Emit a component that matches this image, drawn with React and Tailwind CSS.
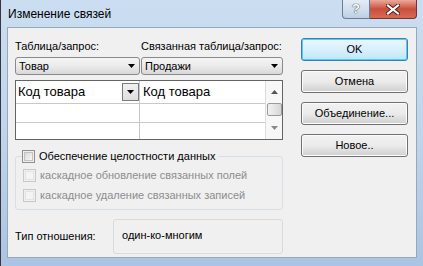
import React from "react";

const font = "font-['Liberation_Sans',Arial,sans-serif]";

function Arrow({ className = "" }) {
	return (
		<svg width="7" height="4" viewBox="0 0 7 4" className={className}>
			<path d="M0 0H7L3.5 4Z" fill="#000" />
		</svg>
	);
}

function Combo({ value, className = "" }) {
	return (
		<div
			className={`h-[18px] flex items-center rounded-[3px] border border-[#8a8a8a] bg-gradient-to-b from-[#f4f4f4] via-[#ebebeb] to-[#d8d8d8] pl-[3px] pr-[4px] text-[11px] text-black ${className}`}
		>
			<span className="flex-1 leading-none">{value}</span>
			<Arrow />
		</div>
	);
}

function Check({ disabled }) {
	return (
		<div
			className={`w-[13px] h-[13px] shrink-0 border p-[1px] ${
				disabled ? "border-[#c8c8c8]" : "border-[#8e8f8f]"
			}`}
		>
			<div
				className={`w-full h-full border ${
					disabled
						? "border-[#e3e3e3] bg-[#f4f4f4]"
						: "border-[#c2c2c2] bg-gradient-to-br from-[#d8d8d8] to-[#f7f7f7]"
				}`}
			/>
		</div>
	);
}

function Button({ children, focused }) {
	return (
		<div
			className={`h-[23px] flex items-center justify-center rounded-[3px] border text-[11px] text-black ${
				focused
					? "border-[#3c7fb1] bg-gradient-to-b from-[#eaf6fd] via-[#d9f0fc] to-[#bee6fd] shadow-[inset_0_0_0_1px_#48d0ff]"
					: "border-[#707070] bg-gradient-to-b from-[#f2f2f2] via-[#ebebeb] to-[#cfcfcf] shadow-[inset_0_0_0_1px_#fcfcfc]"
			}`}
		>
			{children}
		</div>
	);
}

export default function App() {
	return (
		<div
			className={`w-[423px] h-[266px] overflow-hidden flex flex-col border-l border-[#3a3440] bg-gradient-to-b from-[#cbdef1] via-[#bfd5ec] to-[#aac4e3] ${font}`}
		>
			{/* title bar */}
			<div className="h-[27px] flex items-start shrink-0">
				<div className="pl-[7px] pt-[7px] text-[12px] leading-[14px] text-black">
					Изменение связей
				</div>
				<div className="flex-1" />
				<div className="flex mr-[6px]">
					<div className="w-[28px] h-[19px] flex items-center justify-center rounded-bl-[4px] border border-t-0 border-[#6b7c95] bg-gradient-to-b from-[#e4ecf6] via-[#d3dfee] to-[#bdcfe5] text-[13px] font-bold text-white [text-shadow:0_0_1px_#2d3a4c,0_0_1px_#2d3a4c]">
						?
					</div>
					<div className="w-[47px] h-[19px] flex items-center justify-center rounded-br-[4px] border border-t-0 border-l-0 border-[#7b3029] bg-gradient-to-b from-[#e9a89b] via-[#c94e3d] to-[#d76a55]">
						<svg width="14" height="11" viewBox="0 0 14 11">
							<path
								d="M2 1.5L12 9.5M12 1.5L2 9.5"
								stroke="#4a1a14"
								strokeWidth="4"
								strokeLinecap="square"
							/>
							<path
								d="M2 1.5L12 9.5M12 1.5L2 9.5"
								stroke="#fff"
								strokeWidth="2.2"
								strokeLinecap="square"
							/>
						</svg>
					</div>
				</div>
			</div>

			{/* client area */}
			<div className="ml-[6px] mr-[6px] h-[231px] flex border border-[#9aa7b5] bg-[#f0f0f0] pl-[7px]">
				{/* left column */}
				<div className="w-[268px] flex flex-col pt-[11px]">
					<div className="flex text-[11px] leading-[14px] text-black">
						<div className="w-[126px]">Таблица/запрос:</div>
						<div>Связанная таблица/запрос:</div>
					</div>
					<div className="flex gap-[1px] mt-[4px]">
						<Combo value="Товар" className="w-[125px]" />
						<Combo value="Продажи" className="w-[142px]" />
					</div>

					{/* grid */}
					<div className="mt-[5px] h-[60px] flex border border-[#646464] bg-white overflow-hidden">
						<div className="flex-1 flex flex-col">
							<div className="h-[23px] flex border-b border-[#c8c8c8]">
								<div className="w-[124px] flex items-center border-r border-[#c8c8c8] pl-[2px]">
									<span className="flex-1 text-[13px] text-black">Код товара</span>
									<div className="w-[17px] h-[18px] flex items-center justify-center border border-[#7a7a7a] bg-gradient-to-b from-[#f0f0f0] to-[#dedede]">
										<Arrow />
									</div>
								</div>
								<div className="flex-1 flex items-center pl-[3px] text-[13px] text-black">
									Код товара
								</div>
							</div>
							<div className="h-[19px] flex border-b border-[#c8c8c8]">
								<div className="w-[124px] border-r border-[#c8c8c8]" />
								<div className="flex-1" />
							</div>
							<div className="flex-1 flex">
								<div className="w-[124px] border-r border-[#c8c8c8]" />
								<div className="flex-1" />
							</div>
						</div>
						{/* scrollbar */}
						<div className="w-[17px] flex flex-col items-center border-l border-[#dcdcdc] bg-[#f7f7f7]">
							<div className="h-[22px] flex items-center justify-center">
								<svg width="7" height="4" viewBox="0 0 7 4">
									<path d="M0 4H7L3.5 0Z" fill="#555" />
								</svg>
							</div>
							<div className="w-[15px] h-[13px] rounded-[2px] border border-[#9a9a9a] bg-gradient-to-r from-[#f2f2f2] to-[#d6d6d6]" />
							<div className="flex-1 flex items-center justify-center">
								<svg width="7" height="4" viewBox="0 0 7 4">
									<path d="M0 0H7L3.5 4Z" fill="#888" />
								</svg>
							</div>
						</div>
					</div>

					{/* group box */}
					<fieldset className="mt-[10px] h-[60px] rounded-[3px] border border-[#d5dfe5] px-[6px] pb-[3px]">
						<legend className="flex items-center gap-[4px] pr-[3px] text-[11px] leading-[13px] text-black">
							<Check />
							<span>Обеспечение целостности данных</span>
						</legend>
						<div className="h-[20px] mt-[2px] flex items-center gap-[4px] pl-[1px] text-[11px] text-[#8d8d8d]">
							<Check disabled />
							<span>каскадное обновление связанных полей</span>
						</div>
						<div className="h-[20px] flex items-center gap-[4px] pl-[1px] text-[11px] text-[#8d8d8d]">
							<Check disabled />
							<span>каскадное удаление связанных записей</span>
						</div>
					</fieldset>

					{/* type row */}
					<div className="mt-[9px] flex items-center text-[11px] text-black">
						<div className="w-[98px]">Тип отношения:</div>
						<div className="flex-1 h-[35px] rounded-[3px] border border-[#dadada] pl-[8px] pb-[3px] flex items-center">
							один-ко-многим
						</div>
					</div>
				</div>

				{/* buttons */}
				<div className="w-[107px] ml-[18px] pt-[10px] flex flex-col gap-[9px]">
					<Button focused>OK</Button>
					<Button>Отмена</Button>
					<Button>Объединение...</Button>
					<Button>Новое..</Button>
				</div>
			</div>
		</div>
	);
}
